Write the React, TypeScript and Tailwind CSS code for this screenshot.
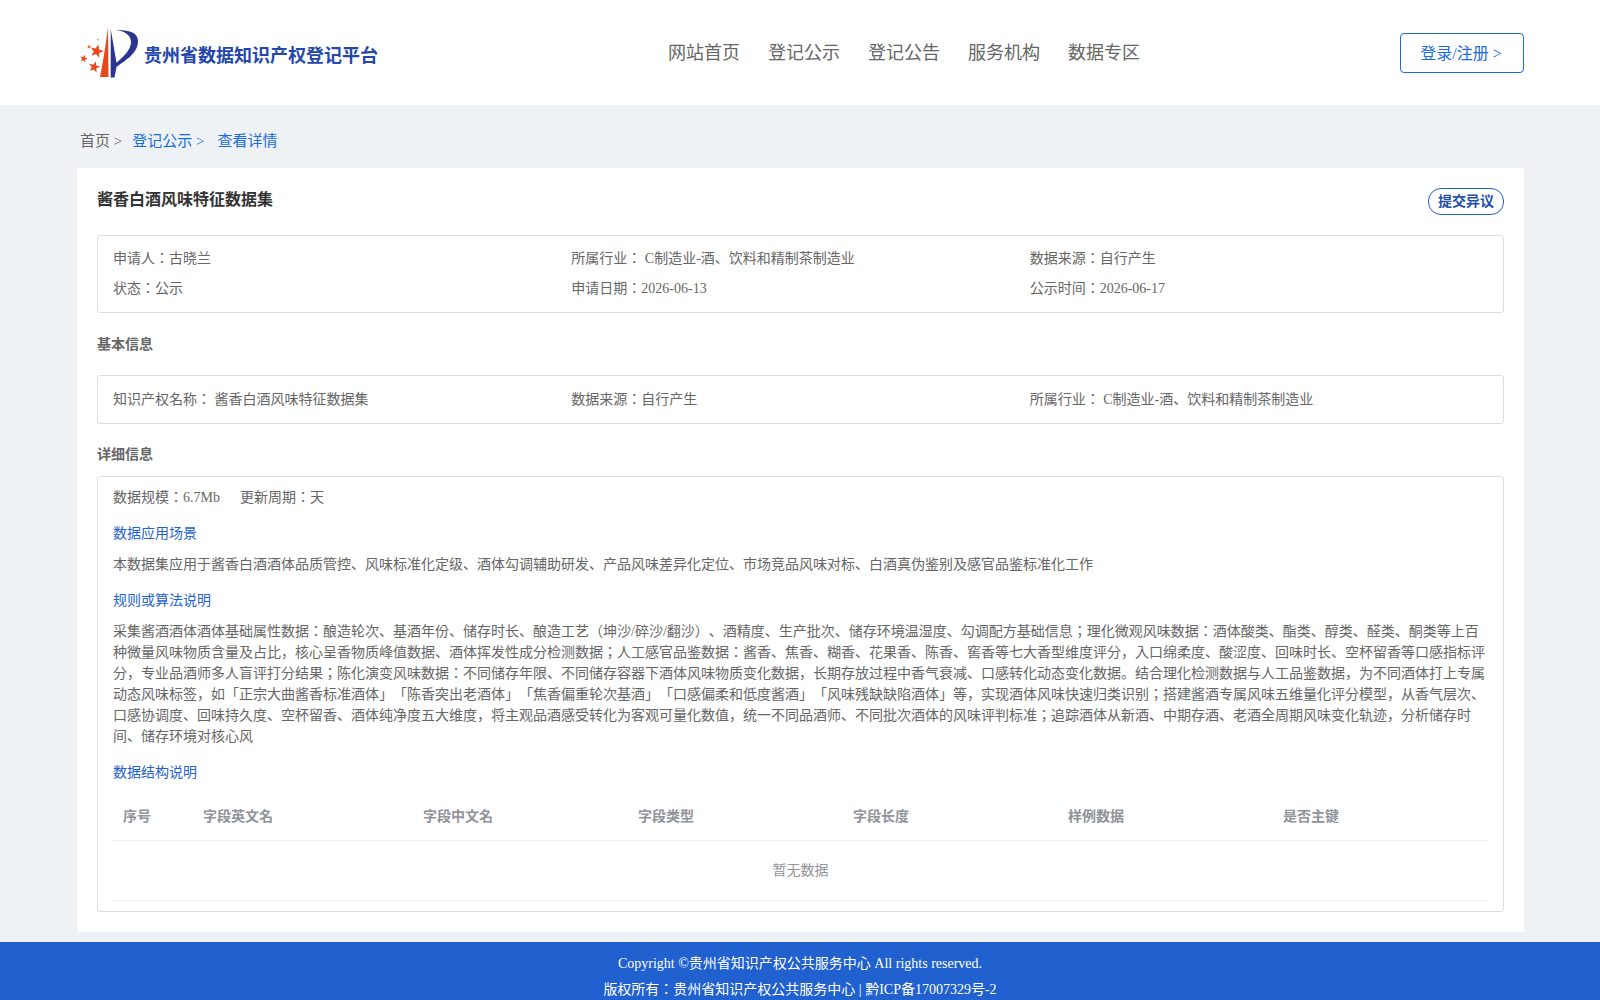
const serif = "font-['Liberation_Serif','Noto_Sans_CJK_JP',serif]";

const columns = ["序号", "字段英文名", "字段中文名", "字段类型", "字段长度", "样例数据", "是否主键"];
const colWidths = ["w-[80px]", "w-[220px]", "w-[215px]", "w-[215px]", "w-[215px]", "w-[215px]", "w-[215px]"];
const nav = ["网站首页", "登记公示", "登记公告", "服务机构", "数据专区"];

function Star({ cx, cy, r }: { cx: number; cy: number; r: number }) {
  const pts = Array.from({ length: 10 }, (_, i) => {
    const a = -Math.PI / 2 + 0.25 + (i * Math.PI) / 5;
    const d = i % 2 ? r * 0.42 : r;
    return `${(cx + d * Math.cos(a)).toFixed(1)},${(cy + d * Math.sin(a)).toFixed(1)}`;
  });
  return <polygon points={pts.join(" ")} fill="#e8481a" />;
}

function Logo() {
  return (
    <svg viewBox="0 0 60 52" className="w-[60px] h-[52px] shrink-0">
      <path d="M28 0 L28.5 50 L20 50 C23 36 26 16 28 0 Z" fill="#e8481a" />
      <path d="M30.7 2 L30.7 50.5 L34.5 50.5 L36.5 40 C46 33 58 26 58 14 C58 5 47 2 36 3.5 C44 3.5 51 8 51 15 C51 23 43 30 36.5 35.7 Z" fill="#2a3590" />
      <Star cx={16.7} cy={24.3} r={7} />
      <Star cx={3.7} cy={31.7} r={4} />
      <Star cx={14.3} cy={40} r={6} />
      <circle cx="9" cy="19.7" r="1.5" fill="#ec6a3e" />
      <circle cx="17.7" cy="12.7" r="0.9" fill="#f08a60" />
    </svg>
  );
}

function Label({ children }: { children: React.ReactNode }) {
  return <div className="text-sm leading-[21px] font-bold text-[#666]">{children}</div>;
}

function SubTitle({ children }: { children: React.ReactNode }) {
  return <div className="text-sm leading-[21px] text-[#1f62d0]">{children}</div>;
}

export default function App() {
  return (
    <div className={`${serif} [text-spacing-trim:space-all] min-h-screen bg-[#eff2f5] text-sm text-[#666]`}>
      <header className="h-[105px] bg-white flex items-center pl-[80px] pr-[76px]">
        <div className="flex items-center w-[588px]">
          <Logo />
          <span className="ml-[4px] mt-[6px] text-lg font-bold text-[#2447ab]">贵州省数据知识产权登记平台</span>
        </div>
        <nav className="flex gap-7 text-lg text-[#666] flex-1">
          {nav.map((n) => (
            <span key={n}>{n}</span>
          ))}
        </nav>
        <button className="w-[124px] h-[40px] border border-[#1a6be0] rounded text-base text-[#1a6be0] bg-white pt-[3px] pr-[2px]">
          登录/注册 &gt;
        </button>
      </header>

      <div className="ml-[77px] mr-[76px]">
        <div className="h-[63px] flex items-center pl-[3px] pt-[10px] text-[15px]">
          <span>首页 &gt;</span>
          <span className="ml-[10px] text-[#1a6be0]">登记公示 &gt;</span>
          <span className="ml-[13px] text-[#1a6be0]">查看详情</span>
        </div>

        <main className="bg-white px-5 pt-5 pb-5">
          <div className="flex justify-between items-start h-[47px]">
            <h1 className="text-base font-bold text-[#333] leading-6">酱香白酒风味特征数据集</h1>
            <button className="w-[76px] h-[27px] border border-[#1f5fcc] rounded-[13px] text-sm font-bold text-[#1f4fa8] bg-white">
              提交异议
            </button>
          </div>

          <div className="border border-[#ddd] rounded-[3px] px-[15px] pt-[12px] pb-[13px] grid grid-cols-3 gap-y-[9px] leading-[21px]">
            <div>申请人：古晓兰</div>
            <div>所属行业： C制造业-酒、饮料和精制茶制造业</div>
            <div>数据来源：自行产生</div>
            <div>状态：公示</div>
            <div>申请日期：2026-06-13</div>
            <div>公示时间：2026-06-17</div>
          </div>

          <div className="mt-[21px] mb-[20px]">
            <Label>基本信息</Label>
          </div>

          <div className="border border-[#ddd] rounded-[3px] px-[15px] py-[13px] grid grid-cols-3 leading-[21px]">
            <div>知识产权名称： 酱香白酒风味特征数据集</div>
            <div>数据来源：自行产生</div>
            <div>所属行业： C制造业-酒、饮料和精制茶制造业</div>
          </div>

          <div className="mt-[20px] mb-[11px]">
            <Label>详细信息</Label>
          </div>

          <div className="border border-[#ddd] rounded-[3px] px-[15px] pt-[10px] pb-[10px] leading-[21px]">
            <div className="flex gap-5">
              <span>数据规模：6.7Mb</span>
              <span>更新周期：天</span>
            </div>
            <div className="mt-[15px]">
              <SubTitle>数据应用场景</SubTitle>
            </div>
            <p className="mt-[10px]">
              本数据集应用于酱香白酒酒体品质管控、风味标准化定级、酒体勾调辅助研发、产品风味差异化定位、市场竞品风味对标、白酒真伪鉴别及感官品鉴标准化工作
            </p>
            <div className="mt-[15px]">
              <SubTitle>规则或算法说明</SubTitle>
            </div>
            <p className="mt-[10px]">
              采集酱酒酒体酒体基础属性数据：酿造轮次、基酒年份、储存时长、酿造工艺（坤沙/碎沙/翻沙）、酒精度、生产批次、储存环境温湿度、勾调配方基础信息；理化微观风味数据：酒体酸类、酯类、醇类、醛类、酮类等上百种微量风味物质含量及占比，核心呈香物质峰值数据、酒体挥发性成分检测数据；人工感官品鉴数据：酱香、焦香、糊香、花果香、陈香、窖香等七大香型维度评分，入口绵柔度、酸涩度、回味时长、空杯留香等口感指标评分，专业品酒师多人盲评打分结果；陈化演变风味数据：不同储存年限、不同储存容器下酒体风味物质变化数据，长期存放过程中香气衰减、口感转化动态变化数据。结合理化检测数据与人工品鉴数据，为不同酒体打上专属动态风味标签，如「正宗大曲酱香标准酒体」「陈香突出老酒体」「焦香偏重轮次基酒」「口感偏柔和低度酱酒」「风味残缺缺陷酒体」等，实现酒体风味快速归类识别；搭建酱酒专属风味五维量化评分模型，从香气层次、口感协调度、回味持久度、空杯留香、酒体纯净度五大维度，将主观品酒感受转化为客观可量化数值，统一不同品酒师、不同批次酒体的风味评判标准；追踪酒体从新酒、中期存酒、老酒全周期风味变化轨迹，分析储存时间、储存环境对核心风
            </p>
            <div className="mt-[15px]">
              <SubTitle>数据结构说明</SubTitle>
            </div>
            <div className="mt-[10px]">
              <div className="flex h-[48px] items-center border-b border-[#ebeef5] font-bold text-[#909399]">
                {columns.map((c, i) => (
                  <div key={c} className={`${colWidths[i]} px-[10px]`}>
                    {c}
                  </div>
                ))}
              </div>
              <div className="h-[60px] flex items-center justify-center border-b border-[#ebeef5] text-[#909399]">
                暂无数据
              </div>
            </div>
          </div>
        </main>
      </div>

      <footer className="mt-[10px] h-[58px] bg-[#2060cf] text-white text-center text-sm leading-[26px] pt-[9px] overflow-hidden">
        <div>Copyright ©贵州省知识产权公共服务中心 All rights reserved.</div>
        <div>版权所有：贵州省知识产权公共服务中心 | 黔ICP备17007329号-2</div>
      </footer>
    </div>
  );
}
